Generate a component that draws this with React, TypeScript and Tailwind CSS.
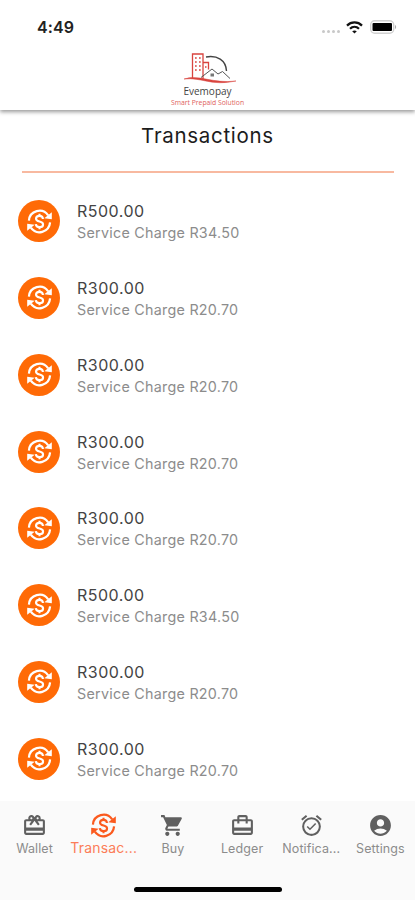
import React from "react";
import { MdRedeem, MdShoppingCart, MdCardTravel, MdOutlineAlarmOn, MdAccountCircle } from "react-icons/md";

function ExchangeIcon({ className }: { className?: string }) {
  return (
    <svg viewBox="0 0 26 26" className={className} fill="none" stroke="currentColor" strokeWidth="2.3">
      <path d="M2 12A11 11 0 0 1 22 6.600" />
      <path d="M24 14A11 11 0 0 1 4 19.400" />
      <path d="M25.800 3.400V10.600L18 9.600z" fill="currentColor" stroke="none" />
      <path d="M.2 22.600V15.400L8 16.400z" fill="currentColor" stroke="none" />
      <path d="M16.600 10.400C16.400 8.200 15 7.200 13 7.200c-2.200 0-3.600 1.100-3.600 2.900 0 4 7.300 2 7.300 5.900 0 1.900-1.600 2.900-3.700 2.900s-3.600-1.100-3.800-3.200M13 5v2.500M13 18.600V21" strokeWidth="2.2" />
    </svg>
  );
}

function StatusBar() {
  return (
    <div className="flex h-[47px] shrink-0 items-start justify-between pt-[19px] pr-[18px] pl-[37px]">
      <span className="text-[16px] leading-4 font-semibold tracking-[0.1px] text-[#222]">4:49</span>
      <div className="flex h-4 items-center">
        <div className="mt-[9px] mr-[6px] flex gap-[2px]">
          {[0, 1, 2, 3].map((i) => (
            <span key={i} className="size-[3px] rounded-full bg-[#c8c8c8]" />
          ))}
        </div>
        <svg viewBox="0 0 17 13" className="mr-[7px] h-[13px] w-[17px]" fill="none" stroke="#111" strokeWidth="2.2">
          <path d="M1 4.6C5.2.4 11.8.4 16 4.6M4 7.7c2.6-2.5 6.4-2.5 9 0" />
          <path d="M8.5 12.6 6.2 10.2c1.3-1.1 3.3-1.1 4.6 0z" fill="#111" stroke="none" />
        </svg>
        <svg viewBox="0 0 27 14" className="h-[14px] w-[27px]">
          <rect x=".7" y=".7" width="23" height="12.6" rx="4" fill="#fff" stroke="#d0d0d0" strokeWidth="1.4" />
          <rect x="2.5" y="3" width="19.5" height="8" rx="1" fill="#000" />
          <path d="M25 5v4c1.5-.5 1.5-3.500 0-4z" fill="#aaa" />
        </svg>
      </div>
    </div>
  );
}

function Logo() {
  return (
    <div className="flex flex-col items-center">
      <svg viewBox="0 0 54 32" className="mt-[5px] ml-[4px] h-8 w-[54px]" fill="none">
        <path d="M9.500 26V2h10.500v25M20 10.500h5.500v7" stroke="#d9443f" strokeWidth="1.300" />
        <path d="M12 6h1.700M16 6h1.700M12 10h1.700M16 10h1.700M12 14h1.700M16 14h1.700M12 18h1.700M16 18h1.700M22 15h1.500" stroke="#d9443f" strokeWidth="1.700" />
        <path d="M23 5c11-2 20 3 20.500 14" stroke="#444" strokeWidth="1.400" />
        <path d="M18 25.500l11-8.500 6 5 4.500-2.500 7.500 7" stroke="#555" strokeWidth="1" />
        <path d="M27.500 21.500h3.500v3h-3.500z" fill="#777" />
        <path d="M1 27c15-5 29 5 52 2-25 5.500-34-4-52-2z" fill="#d9443f" stroke="#d9443f" strokeWidth=".5" />
      </svg>
      <span className="mt-[2px] text-[10px] leading-[11px] text-[#444] [font-family:'Open_Sans',sans-serif]">Evemopay</span>
      <span className="mt-[2px] text-[6.8px] leading-2 text-[#e0625c] [font-family:'Open_Sans',sans-serif]">Smart Prepaid Solution</span>
    </div>
  );
}

const transactions = [
  ["R500.00", "R34.50"],
  ["R300.00", "R20.70"],
  ["R300.00", "R20.70"],
  ["R300.00", "R20.70"],
  ["R300.00", "R20.70"],
  ["R500.00", "R34.50"],
  ["R300.00", "R20.70"],
  ["R300.00", "R20.70"],
];

const tabs = [
  { label: "Wallet", icon: MdRedeem },
  { label: "Transac...", icon: ExchangeIcon, active: true },
  { label: "Buy", icon: MdShoppingCart },
  { label: "Ledger", icon: MdCardTravel },
  { label: "Notifica...", icon: MdOutlineAlarmOn },
  { label: "Settings", icon: MdAccountCircle },
];

export default function App() {
  return (
    <div className="flex h-[900px] w-[415px] flex-col overflow-hidden bg-white font-['Inter',sans-serif]">
      <header className="h-[110px] shrink-0 bg-white shadow-[0_2px_4px_rgba(0,0,0,0.4)]">
        <StatusBar />
        <Logo />
      </header>
      <main className="flex h-[691px] shrink-0 flex-col overflow-hidden pt-[14px]">
        <h1 className="text-center text-[20.5px] leading-6 font-normal tracking-[0.7px] text-[#1c1c1c]">Transactions</h1>
        <div className="mr-[21px] ml-[22px] mt-[23px] h-[2px] shrink-0 bg-[#f8b9a0]" />
        <ul className="pt-[9.800px]">
          {transactions.map(([amount, charge], i) => (
            <li key={i} className="flex h-[76.800px] items-center pl-[18px]">
              <span className="flex size-[42px] items-center justify-center rounded-full bg-[#ff6a06] text-white">
                <ExchangeIcon className="size-[25px]" />
              </span>
              <div className="mt-[2px] ml-[17px]">
                <p className="text-[16px] leading-[22px] tracking-[0.500px] text-[#444]">{amount}</p>
                <p className="text-[14.300px] leading-[22px] tracking-[0.270px] text-[#8c8c8c]">Service Charge {charge}</p>
              </div>
            </li>
          ))}
        </ul>
      </main>
      <nav className="flex grow flex-col bg-[#fafafa]">
        <div className="grid grid-cols-6 pt-[12px]">
          {tabs.map(({ label, icon: Icon, active }) => (
            <div key={label} className={`flex flex-col items-center ${active ? "text-[#fb5a1e]" : "text-[#606060]"}`}>
              <Icon className="size-[25px]" />
              <span className={`leading-[18px] whitespace-nowrap ${active ? "mt-[1px] text-[14px] tracking-[0.200px] text-[#fc7d58]" : "mt-[2px] text-[12.500px] tracking-[0.100px] text-[#8c8c8c]"}`}>{label}</span>
            </div>
          ))}
        </div>
        <div className="mx-auto mt-[29px] h-[5px] w-[148px] rounded-full bg-black" />
      </nav>
    </div>
  );
}
